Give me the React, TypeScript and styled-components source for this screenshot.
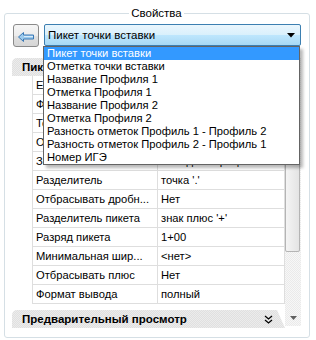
import React from "react";
import styled, { createGlobalStyle } from "styled-components";

const GlobalStyle = createGlobalStyle`
  html, body {
    margin: 0;
    padding: 0;
    background: #ffffff;
  }
  body {
    font-family: "Liberation Sans", Arial, sans-serif;
    font-size: 11px;
    color: #000;
  }
`;

const Group = styled.fieldset`
  box-sizing: border-box;
  width: 306px;
  height: 332px;
  margin: 6px 0 0 4px;
  padding: 4px 8px 0 7px;
  border: 1px solid #d5dfe5;
  border-radius: 3px;
  min-width: 0;
`;

const Title = styled.legend`
  margin: 0 auto;
  padding: 0 2px;
  line-height: 14px;
  font-size: 11.5px;
`;

const Toolbar = styled.div`
  position: relative;
  display: flex;
  align-items: flex-start;
  gap: 5px;
  padding-left: 1px;
`;

const BackButton = styled.button`
  box-sizing: border-box;
  width: 26px;
  height: 23px;
  padding: 2px 0 0;
  border: 1px solid #8a8a8a;
  border-radius: 3px;
  background: linear-gradient(#f6f6f6 0%, #ececec 50%, #e0e0e0 51%, #d6d6d6 100%);
  display: flex;
  align-items: center;
  justify-content: center;
`;

const Combo = styled.div`
  box-sizing: border-box;
  flex: 1;
  height: 22px;
  border: 1px solid #3c7fb1;
  border-radius: 2px;
  background: linear-gradient(#eaf6fd 0%, #d9f0fc 50%, #bee6fd 51%, #a7d9f5 100%);
  display: flex;
  align-items: center;
  justify-content: space-between;
  padding: 0 5px 0 3px;
  line-height: 20px;
  font-size: 11.5px;
`;

const DropList = styled.ul`
  position: absolute;
  top: 22px;
  left: 31px;
  z-index: 5;
  box-sizing: border-box;
  width: 257px;
  margin: 0;
  padding: 0;
  list-style: none;
  background: #fff;
  border: 1px solid #646464;
  box-shadow: 3px 3px 3px rgba(0, 0, 0, 0.28);
`;

const DropItem = styled.li<{ $active?: boolean }>`
  height: 13px;
  line-height: 13px;
  padding-left: 3px;
  font-size: 11.2px;
  white-space: nowrap;
  background: ${(p) => (p.$active ? "#3399ff" : "transparent")};
  color: ${(p) => (p.$active ? "#fff" : "#000")};
`;

const Grid = styled.div`
  display: flex;
  height: 268px;
  margin-top: 11px;
`;

const List = styled.div`
  flex: 1;
  display: flex;
  flex-direction: column;
`;

const Category = styled.div<{ $tab?: boolean }>`
  height: 18px;
  line-height: 18px;
  padding: 0 12px 0 10px;
  font-weight: bold;
  font-size: 11.5px;
  border-top-left-radius: 5px;
  background: repeating-conic-gradient(#e0e0e0 0 25%, #ececec 0 50%) 0 0 / 2px 2px;
  clip-path: ${(p) =>
    p.$tab ? "polygon(0 0, calc(100% - 8px) 0, 100% 100%, 0 100%)" : "none"};
  margin-top: ${(p) => (p.$tab ? "6px" : "0")};
  display: flex;
  align-items: center;
  justify-content: space-between;
`;

const Row = styled.div`
  display: grid;
  grid-template-columns: 20px 125px 1fr;
  height: 19px;
`;

const Gutter = styled.div`
  background: #fff;
`;

const Cell = styled.div<{ $last?: boolean }>`
  box-sizing: border-box;
  border-left: 1px solid #dedede;
  border-right: ${(p) => (p.$last ? "1px solid #dedede" : "none")};
  border-bottom: 1px solid #dedede;
  padding-left: 3px;
  line-height: 18px;
  font-size: 11.2px;
  white-space: nowrap;
  overflow: hidden;
`;

const ScrollBar = styled.div`
  width: 16px;
  display: flex;
  flex-direction: column;
  background: repeating-conic-gradient(#eaeaea 0 25%, #f7f7f7 0 50%) 0 0 / 2px 2px;
`;

const ScrollButton = styled.div`
  height: 17px;
  display: flex;
  align-items: center;
  justify-content: center;
`;

const Thumb = styled.div`
  box-sizing: border-box;
  width: 15px;
  height: 177px;
  border: 1px solid #b4b4b4;
  border-radius: 2px;
  background: linear-gradient(90deg, #f4f4f4, #e4e4e4);
`;

const Spacer = styled.div`
  flex: 1;
`;

const items = [
  "Пикет точки вставки",
  "Отметка точки вставки",
  "Название Профиля 1",
  "Отметка Профиля 1",
  "Название Профиля 2",
  "Отметка Профиля 2",
  "Разность отметок Профиль 1 - Профиль 2",
  "Разность отметок Профиль 2 - Профиль 1",
  "Номер ИГЭ",
];

const rows: [string, string][] = [
  ["Единицы измерения", "метры"],
  ["Формат", "десятичный"],
  ["Точность", "0.00"],
  ["Округление", "математическое"],
  ["Знак", "знак для отрицательн..."],
  ["Разделитель", "точка '.'"],
  ["Отбрасывать дробн...", "Нет"],
  ["Разделитель пикета", "знак плюс '+'"],
  ["Разряд пикета", "1+00"],
  ["Минимальная шир...", "<нет>"],
  ["Отбрасывать плюс", "Нет"],
  ["Формат вывода", "полный"],
];

const App = () => {
  return (
    <>
      <GlobalStyle />
      <Group>
        <Title>Свойства</Title>
        <Toolbar>
          <BackButton>
            <svg width="16" height="10" viewBox="0 0 16 10">
              <path
                d="M0.5 5 L5.5 0.5 V3 H15.5 V7 H5.5 V9.5 Z"
                fill="#9ccbee"
                stroke="#3a78b5"
              />
              <path d="M6 4.5 H15" stroke="#d9ecfa" />
            </svg>
          </BackButton>
          <Combo>
            <span>Пикет точки вставки</span>
            <svg width="8" height="5" viewBox="0 0 8 5">
              <path d="M0 0 H8 L4 4.5 Z" fill="#000" />
            </svg>
          </Combo>
          <DropList>
            {items.map((it, i) => (
              <DropItem key={it} $active={i === 0}>
                {it}
              </DropItem>
            ))}
          </DropList>
        </Toolbar>
        <Grid>
          <List>
            <Category>Пикет</Category>
            {rows.map(([name, value]) => (
              <Row key={name}>
                <Gutter />
                <Cell>{name}</Cell>
                <Cell $last>{value}</Cell>
              </Row>
            ))}
            <Category $tab>
              Предварительный просмотр
              <svg width="9" height="9" viewBox="0 0 9 9">
                <path
                  d="M1 1 L4.5 4 L8 1 M1 5 L4.5 8 L8 5"
                  fill="none"
                  stroke="#000"
                  strokeWidth="1.3"
                />
              </svg>
            </Category>
          </List>
          <ScrollBar>
            <ScrollButton />
            <Thumb />
            <Spacer />
            <ScrollButton>
              <svg width="7" height="4" viewBox="0 0 7 4">
                <path d="M0 0 H7 L3.5 4 Z" fill="#606060" />
              </svg>
            </ScrollButton>
          </ScrollBar>
        </Grid>
      </Group>
    </>
  );
};

export default App;
